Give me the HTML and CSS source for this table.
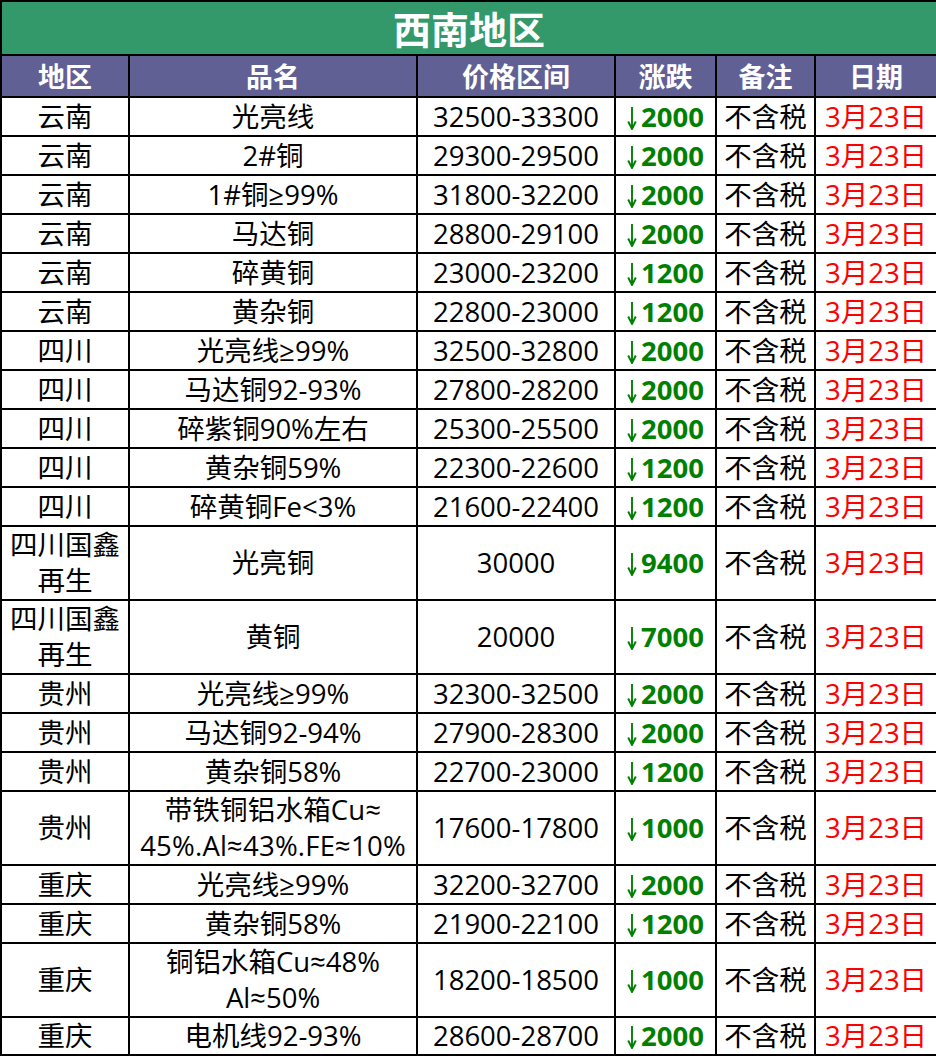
FILE: index.html
```html
<!DOCTYPE html>
<html lang="zh-CN">
<head>
<meta charset="utf-8">
<title>西南地区</title>
<link rel="stylesheet" href="styles.css">
</head>
<body>
<svg width="0" height="0" class="defs" aria-hidden="true">
  <symbol id="down" viewBox="0 0 10 24">
    <path d="M5 1V22.5M1.2 15.5L5 23L8.8 15.5" fill="none" stroke="currentColor" stroke-width="1.9" stroke-linejoin="miter"/>
  </symbol>
</svg>
<table class="price">
  <colgroup>
    <col class="c-region"><col class="c-name"><col class="c-price"><col class="c-change"><col class="c-note"><col class="c-date">
  </colgroup>
  <thead>
    <tr class="title-row"><th colspan="6">西南地区</th></tr>
    <tr class="head-row"><th>地区</th><th>品名</th><th>价格区间</th><th>涨跌</th><th>备注</th><th>日期</th></tr>
  </thead>
  <tbody>
    <tr><td>云南</td><td>光亮线</td><td>32500-33300</td><td class="chg"><svg class="arr"><use href="#down"/></svg><b>2000</b></td><td>不含税</td><td class="date">3月23日</td></tr>
    <tr><td>云南</td><td>2#铜</td><td>29300-29500</td><td class="chg"><svg class="arr"><use href="#down"/></svg><b>2000</b></td><td>不含税</td><td class="date">3月23日</td></tr>
    <tr><td>云南</td><td>1#铜≥99%</td><td>31800-32200</td><td class="chg"><svg class="arr"><use href="#down"/></svg><b>2000</b></td><td>不含税</td><td class="date">3月23日</td></tr>
    <tr><td>云南</td><td>马达铜</td><td>28800-29100</td><td class="chg"><svg class="arr"><use href="#down"/></svg><b>2000</b></td><td>不含税</td><td class="date">3月23日</td></tr>
    <tr><td>云南</td><td>碎黄铜</td><td>23000-23200</td><td class="chg"><svg class="arr"><use href="#down"/></svg><b>1200</b></td><td>不含税</td><td class="date">3月23日</td></tr>
    <tr><td>云南</td><td>黄杂铜</td><td>22800-23000</td><td class="chg"><svg class="arr"><use href="#down"/></svg><b>1200</b></td><td>不含税</td><td class="date">3月23日</td></tr>
    <tr><td>四川</td><td>光亮线≥99%</td><td>32500-32800</td><td class="chg"><svg class="arr"><use href="#down"/></svg><b>2000</b></td><td>不含税</td><td class="date">3月23日</td></tr>
    <tr><td>四川</td><td>马达铜92-93%</td><td>27800-28200</td><td class="chg"><svg class="arr"><use href="#down"/></svg><b>2000</b></td><td>不含税</td><td class="date">3月23日</td></tr>
    <tr><td>四川</td><td>碎紫铜90%左右</td><td>25300-25500</td><td class="chg"><svg class="arr"><use href="#down"/></svg><b>2000</b></td><td>不含税</td><td class="date">3月23日</td></tr>
    <tr><td>四川</td><td>黄杂铜59%</td><td>22300-22600</td><td class="chg"><svg class="arr"><use href="#down"/></svg><b>1200</b></td><td>不含税</td><td class="date">3月23日</td></tr>
    <tr><td>四川</td><td>碎黄铜Fe&lt;3%</td><td>21600-22400</td><td class="chg"><svg class="arr"><use href="#down"/></svg><b>1200</b></td><td>不含税</td><td class="date">3月23日</td></tr>
    <tr class="tall"><td>四川国鑫<br>再生</td><td>光亮铜</td><td>30000</td><td class="chg"><svg class="arr"><use href="#down"/></svg><b>9400</b></td><td>不含税</td><td class="date">3月23日</td></tr>
    <tr class="tall"><td>四川国鑫<br>再生</td><td>黄铜</td><td>20000</td><td class="chg"><svg class="arr"><use href="#down"/></svg><b>7000</b></td><td>不含税</td><td class="date">3月23日</td></tr>
    <tr><td>贵州</td><td>光亮线≥99%</td><td>32300-32500</td><td class="chg"><svg class="arr"><use href="#down"/></svg><b>2000</b></td><td>不含税</td><td class="date">3月23日</td></tr>
    <tr><td>贵州</td><td>马达铜92-94%</td><td>27900-28300</td><td class="chg"><svg class="arr"><use href="#down"/></svg><b>2000</b></td><td>不含税</td><td class="date">3月23日</td></tr>
    <tr><td>贵州</td><td>黄杂铜58%</td><td>22700-23000</td><td class="chg"><svg class="arr"><use href="#down"/></svg><b>1200</b></td><td>不含税</td><td class="date">3月23日</td></tr>
    <tr class="tall"><td>贵州</td><td class="tight">带铁铜铝水箱Cu≈<br>45%.Al≈43%.FE≈10%</td><td>17600-17800</td><td class="chg"><svg class="arr"><use href="#down"/></svg><b>1000</b></td><td>不含税</td><td class="date">3月23日</td></tr>
    <tr><td>重庆</td><td>光亮线≥99%</td><td>32200-32700</td><td class="chg"><svg class="arr"><use href="#down"/></svg><b>2000</b></td><td>不含税</td><td class="date">3月23日</td></tr>
    <tr><td>重庆</td><td>黄杂铜58%</td><td>21900-22100</td><td class="chg"><svg class="arr"><use href="#down"/></svg><b>1200</b></td><td>不含税</td><td class="date">3月23日</td></tr>
    <tr class="tall"><td>重庆</td><td>铜铝水箱Cu≈48%<br>Al≈50%</td><td>18200-18500</td><td class="chg"><svg class="arr"><use href="#down"/></svg><b>1000</b></td><td>不含税</td><td class="date">3月23日</td></tr>
    <tr class="last"><td>重庆</td><td>电机线92-93%</td><td>28600-28700</td><td class="chg"><svg class="arr"><use href="#down"/></svg><b>2000</b></td><td>不含税</td><td class="date">3月23日</td></tr>
  </tbody>
</table>
</body>
</html>
```

FILE: styles.css
```css
html, body {
  margin: 0;
  padding: 0;
  background: #ffffff;
}

body {
  font-family: "Open Sans", "Noto Sans CJK SC", "DejaVu Sans", sans-serif;
  color: #000000;
}

.defs {
  position: absolute;
  width: 0;
  height: 0;
  overflow: hidden;
}

.price {
  width: 936px;
  border-collapse: collapse;
  table-layout: fixed;
  font-size: 27.5px;
  line-height: 36px;
}

.c-region { width: 128px; }
.c-name { width: 288px; }
.c-price { width: 198px; }
.c-change { width: 101px; }
.c-note { width: 99px; }
.c-date { width: 122px; }

.price th,
.price td {
  border: 2px solid #000000;
  padding: 0;
  text-align: center;
  vertical-align: middle;
  white-space: nowrap;
  overflow: hidden;
}

.price tr.title-row { height: 54px; }
.price tr.head-row { height: 42px; }

.title-row th {
  background: #34996a;
  color: #ffffff;
  font-family: "Noto Sans CJK SC", sans-serif;
  font-weight: 700;
  font-size: 38px;
  line-height: 46px;
}

.head-row th {
  background: #616095;
  color: #ffffff;
  font-family: "Noto Sans CJK SC", sans-serif;
  font-weight: 700;
  font-size: 27px;
  line-height: 36px;
}

.price tbody tr { height: 39px; }
.price tbody tr.tall { height: 74px; }
.price tbody tr.last { height: 38px; }

.price td.tight {
  letter-spacing: 0.2px;
}

.chg {
  color: #008000;
}

.chg .arr {
  width: 10px;
  height: 24px;
  vertical-align: -3px;
  margin-right: 4px;
  color: #008000;
}

.chg b {
  font-weight: 700;
}

.date {
  color: #ff0000;
}
```
